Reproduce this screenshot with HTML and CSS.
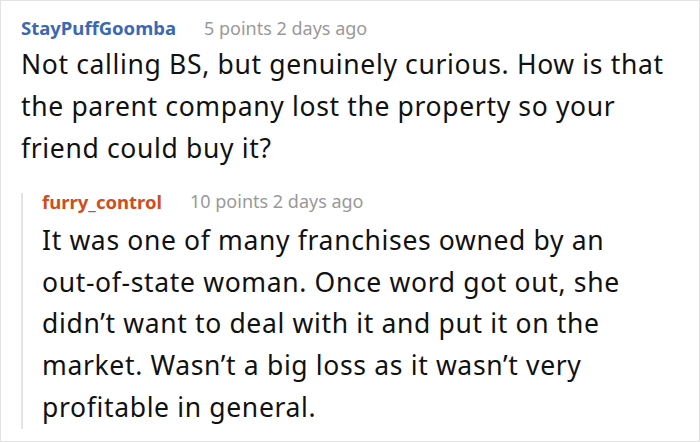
FILE: index.html
```html
<!DOCTYPE html>
<html>
<head>
<meta charset="utf-8">
<link rel="stylesheet" href="styles.css">
</head>
<body>
<div class="frame">
  <div class="comment">
    <div class="meta"><span class="user user-blue">StayPuffGoomba</span><span class="info">5 points 2 days ago</span></div>
    <p class="text">Not calling BS, but genuinely curious. How is that the parent company lost the property so your friend could buy it?</p>
    <div class="reply">
      <div class="meta meta-reply"><span class="user user-orange">furry_control</span><span class="info">10 points 2 days ago</span></div>
      <p class="text text-reply">It was one of many franchises owned by an <span class="nowrap">out-of-state</span> woman. Once word got out, she didn’t want to deal with it and put it on the market. Wasn’t a big loss as it wasn’t very profitable in general.</p>
    </div>
  </div>
</div>
</body>
</html>
```
FILE: styles.css
```css
html, body {
  margin: 0;
  padding: 0;
  background: #fff;
}
.frame {
  width: 700px;
  height: 442px;
  box-sizing: border-box;
  border: 1px solid #e2e2e2;
  font-family: "Noto Sans", "Open Sans", sans-serif;
  overflow: hidden;
}
.comment {
  padding: 15px 27px 0 20px;
}
.meta {
  font-size: 18px;
  line-height: 24px;
  display: flex;
  gap: 28px;
}
.user {
  font-weight: 700;
  font-size: 18.5px;
}
.user-blue {
  color: #3c68b3;
}
.user-orange {
  color: #d14d1c;
}
.info {
  color: #999;
}
.text {
  margin: 3px 0 0;
  font-size: 26.5px;
  letter-spacing: 0.65px;
  line-height: 42px;
  color: #111;
}
.nowrap {
  white-space: nowrap;
}
.reply {
  margin-top: 26px;
  border-left: 2px solid #e4e4e4;
  padding-left: 19px;
}
.meta-reply {
  line-height: 17px;
  margin-top: -2px;
}
.text-reply {
  margin-top: 10px;
  line-height: 41.7px;
  margin-bottom: -9px;
}
```
